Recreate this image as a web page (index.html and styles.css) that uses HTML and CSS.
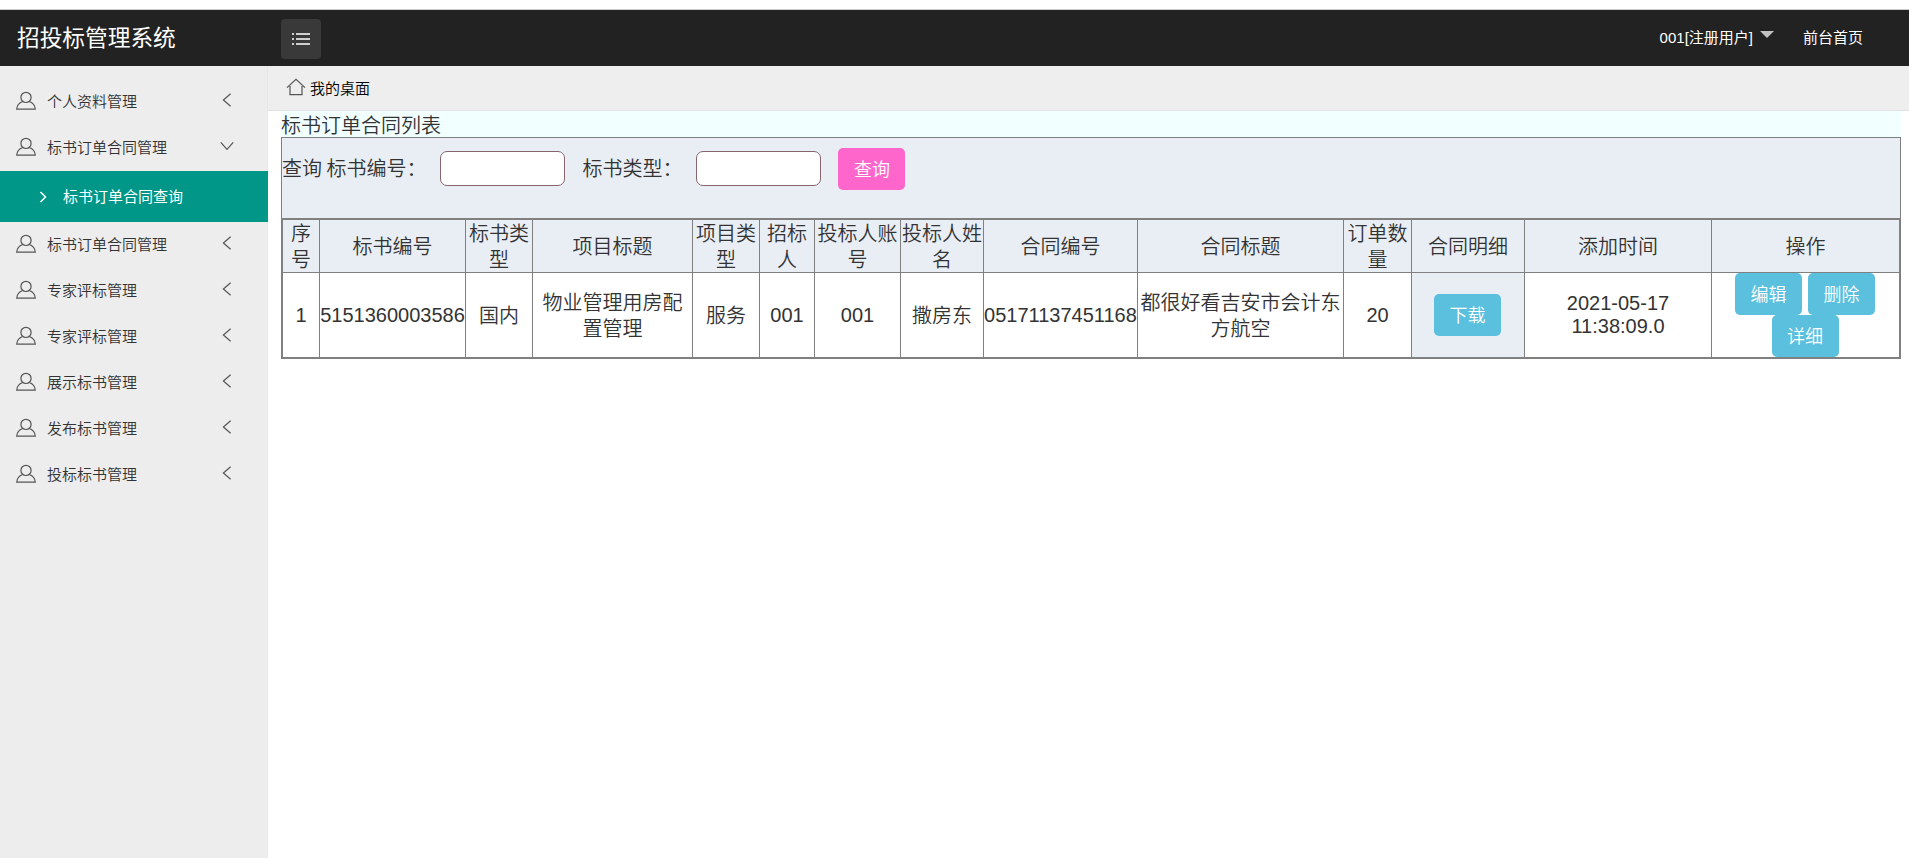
FILE: index.html
```html
<!DOCTYPE html>
<html lang="zh-CN">
  <head>
    <meta charset="UTF-8" />
    <title>招投标管理系统</title>
    <link rel="stylesheet" href="styles.css">
  </head>
  <body>
    <svg class="sprite" width="0" height="0">
      <symbol id="icon-user" viewBox="0 0 20 20">
        <circle cx="10" cy="6.4" r="5.1" />
        <path d="M6.7 10.5C3.4 11.7 0.9 14.4 0.7 18.2H19.3C19.1 14.4 16.6 11.7 13.3 10.5" />
      </symbol>
      <symbol id="icon-left" viewBox="0 0 14 14">
        <path d="M10.6 0.8L3.4 7L10.6 13.2" />
      </symbol>
      <symbol id="icon-down" viewBox="0 0 14 14">
        <path d="M0.8 3.4L7 10.4L13.2 3.4" />
      </symbol>
    </svg>

    <header class="header">
      <a class="logo" href="#">招投标管理系统</a>
      <button class="toggle-btn" aria-label="菜单">
        <svg width="20" height="14" viewBox="0 0 20 14">
          <path d="M5 2H19M5 7H19M5 12H19" />
          <path d="M1 2H3M1 7H3M1 12H3" />
        </svg>
      </button>
      <nav class="user-nav">
        <a href="#">001[注册用户]<span class="caret"></span></a>
        <a href="#">前台首页</a>
      </nav>
    </header>

    <div class="container">
      <aside class="sidebar">
        <ul>
          <li><svg class="user"><use href="#icon-user" /></svg>个人资料管理<svg class="arrow"><use href="#icon-left" /></svg></li>
          <li><svg class="user"><use href="#icon-user" /></svg>标书订单合同管理<svg class="arrow"><use href="#icon-down" /></svg></li>
          <li class="active">
            <svg class="sub-arrow" viewBox="0 0 8 12"><path d="M1.5 1L6.5 6L1.5 11" /></svg>标书订单合同查询
          </li>
          <li><svg class="user"><use href="#icon-user" /></svg>标书订单合同管理<svg class="arrow"><use href="#icon-left" /></svg></li>
          <li><svg class="user"><use href="#icon-user" /></svg>专家评标管理<svg class="arrow"><use href="#icon-left" /></svg></li>
          <li><svg class="user"><use href="#icon-user" /></svg>专家评标管理<svg class="arrow"><use href="#icon-left" /></svg></li>
          <li><svg class="user"><use href="#icon-user" /></svg>展示标书管理<svg class="arrow"><use href="#icon-left" /></svg></li>
          <li><svg class="user"><use href="#icon-user" /></svg>发布标书管理<svg class="arrow"><use href="#icon-left" /></svg></li>
          <li><svg class="user"><use href="#icon-user" /></svg>投标标书管理<svg class="arrow"><use href="#icon-left" /></svg></li>
        </ul>
      </aside>

      <main class="main">
        <div class="tab-bar">
          <svg class="home" viewBox="0 0 20 18">
            <path d="M1 9.6L10 1.2L19 9.6M4 8V16.6H16V8" />
          </svg>
          我的桌面
        </div>
        <div class="content">
          <h2>标书订单合同列表</h2>
          <div class="panel">
            <form class="search">
              <span>查询 标书编号：</span>
              <input type="text" aria-label="标书编号" />
              <span>标书类型：</span>
              <input type="text" aria-label="标书类型" />
              <button type="button" class="btn btn-pink">查询</button>
            </form>
            <table>
              <colgroup>
                <col class="c-no">
                <col class="c-code">
                <col class="c-type">
                <col class="c-title">
                <col class="c-type">
                <col class="c-owner">
                <col class="c-account">
                <col class="c-name">
                <col class="c-contract">
                <col class="c-contract-title">
                <col class="c-count">
                <col class="c-file">
                <col class="c-time">
                <col class="c-action">
              </colgroup>
              <thead>
                <tr>
                  <th>序号</th>
                  <th>标书编号</th>
                  <th>标书类型</th>
                  <th>项目标题</th>
                  <th>项目类型</th>
                  <th>招标人</th>
                  <th>投标人账号</th>
                  <th>投标人姓名</th>
                  <th>合同编号</th>
                  <th>合同标题</th>
                  <th>订单数量</th>
                  <th>合同明细</th>
                  <th>添加时间</th>
                  <th>操作</th>
                </tr>
              </thead>
              <tbody>
                <tr>
                  <td class="num">1</td>
                  <td class="num">5151360003586</td>
                  <td>国内</td>
                  <td>物业管理用房配置管理</td>
                  <td>服务</td>
                  <td class="num">001</td>
                  <td class="num">001</td>
                  <td>撒房东</td>
                  <td class="num">05171137451168</td>
                  <td>都很好看吉安市会计东方航空</td>
                  <td class="num">20</td>
                  <td class="file">
                    <div class="actions">
                      <a class="btn" href="#">下载</a>
                    </div>
                  </td>
                  <td class="num time">2021-05-17<br>11:38:09.0</td>
                  <td>
                    <div class="actions">
                      <a class="btn" href="#">编辑</a>
                      <a class="btn" href="#">删除</a>
                      <a class="btn" href="#">详细</a>
                    </div>
                  </td>
                </tr>
              </tbody>
            </table>
          </div>
        </div>
      </main>
    </div>
  </body>
</html>
```

FILE: styles.css
```css
* {
  margin: 0;
  padding: 0;
  box-sizing: border-box;
}
body {
  font-family: "Liberation Sans", "Noto Sans CJK SC", sans-serif;
  font-size: 15px;
  font-weight: 350;
  color: #333;
  background: #fff;
  height: 100vh;
  padding-top: 9px;
  display: flex;
  flex-direction: column;
  overflow: hidden;
}
a {
  color: inherit;
  text-decoration: none;
}
svg {
  fill: none;
  stroke: #555;
  stroke-width: 1.2;
  flex: none;
}
.sprite {
  display: none;
}

.header {
  height: 57px;
  flex: none;
  display: flex;
  align-items: center;
  background: #222;
  border-top: 1px solid #ccc;
  color: #fff;
  font-weight: 400;
}
.logo {
  width: 281px;
  padding-left: 17px;
  font-size: 22.7px;
  line-height: 56px;
  height: 56px;
}
.toggle-btn {
  width: 40px;
  height: 40px;
  margin-top: 2px;
  border: none;
  border-radius: 4px;
  background: #393939;
  display: flex;
  align-items: center;
  justify-content: center;
}
.toggle-btn svg {
  stroke: #fff;
  stroke-width: 1.5;
}
.user-nav {
  margin-left: auto;
  margin-right: 46px;
  display: flex;
  gap: 29px;
  line-height: 55px;
  height: 56px;
}
.caret {
  display: inline-block;
  margin-left: 7px;
  vertical-align: 5px;
  border: 7px solid transparent;
  border-top-color: #c2c2c2;
  border-bottom: none;
}

.container {
  flex: 1;
  display: flex;
}
.sidebar {
  width: 268px;
  flex: none;
  padding-top: 13px;
  background: #ededed;
  border-right: 1px solid #e8e8e8;
}
.sidebar ul {
  list-style: none;
}
.sidebar li {
  height: 46px;
  padding-left: 16px;
  display: flex;
  align-items: center;
  line-height: 46px;
}
.user {
  width: 20px;
  height: 20px;
  margin: -2px 11px 0 0;
}
.arrow {
  width: 14px;
  height: 14px;
  margin: -5px 33px 0 auto;
}
.sidebar .active {
  height: 51px;
  width: 268px;
  padding-left: 39px;
  background: #009688;
  color: #fff;
  font-weight: 400;
}
.sub-arrow {
  width: 8px;
  height: 12px;
  margin-right: 16px;
  stroke: #fff;
  stroke-width: 1.5;
}

.main {
  flex: 1;
}
.tab-bar {
  height: 45px;
  padding-left: 18px;
  display: flex;
  align-items: center;
  gap: 4px;
  line-height: 45px;
  background: #eeeeef;
  border-bottom: 1px solid #e2e2e2;
  color: #000;
}
.home {
  width: 20px;
  height: 18px;
  margin-top: -2px;
}
.content {
  padding: 0 8px 0 13px;
  font-family: "Noto Sans CJK SC", sans-serif;
  font-size: 20px;
}
h2 {
  height: 26px;
  font-size: 20px;
  font-weight: 350;
  line-height: 28px;
  background: #f2ffff;
}
.panel {
  border: 1px solid #808080;
  background: #e9eef5;
}
.search {
  height: 81px;
  padding-top: 10px;
  display: flex;
  align-items: flex-start;
  line-height: 40px;
  border-bottom: 1px solid #808080;
}
.search span {
  white-space: nowrap;
}
.search input {
  width: 125px;
  height: 35px;
  margin: 3px 17px 0 14px;
  border: 1px solid #86656f;
  border-radius: 7px;
  background: #fff;
}
.btn {
  display: inline-block;
  width: 67px;
  height: 42px;
  border: none;
  border-radius: 5px;
  background: #5bc0de;
  color: #fff;
  font-family: inherit;
  font-size: 18px;
  font-weight: 350;
  line-height: 40px;
  text-align: center;
}
.btn-pink {
  padding-bottom: 3px;
  background: #ff66cc;
}

table {
  width: 1618px;
  table-layout: fixed;
  border-collapse: separate;
  border-spacing: 0;
  border-top: 1px solid #808080;
  border-left: 1px solid #808080;
}
th,
td {
  border-right: 1px solid #808080;
  border-bottom: 1px solid #808080;
  font-weight: 350;
  line-height: 26px;
  text-align: center;
  vertical-align: middle;
}
th {
  height: 53px;
}
td {
  height: 85px;
  background: #fff;
}
.num {
  font-family: "Liberation Sans", sans-serif;
}
.file {
  background: #e9eef5;
}
.time {
  line-height: 23px;
}
.actions {
  display: flex;
  flex-wrap: wrap;
  justify-content: center;
  column-gap: 6px;
  padding-right: 1px;
}
.c-no { width: 37px; }
.c-code { width: 146px; }
.c-type { width: 67px; }
.c-title { width: 160px; }
.c-owner { width: 55px; }
.c-account { width: 86px; }
.c-name { width: 83px; }
.c-contract { width: 154px; }
.c-contract-title { width: 206px; }
.c-count { width: 68px; }
.c-file { width: 113px; }
.c-time { width: 187px; }
.c-action { width: 188px; }
```
